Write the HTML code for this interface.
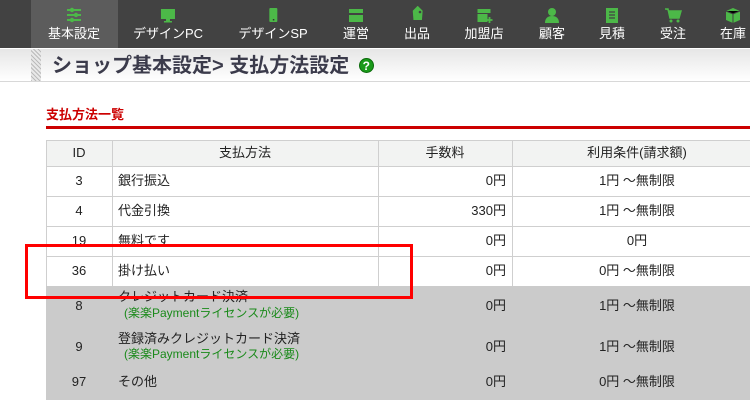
<!DOCTYPE html>
<html><head><meta charset="utf-8"><style>
*{margin:0;padding:0;box-sizing:border-box}
body{width:750px;height:400px;overflow:hidden;background:#fff;font-family:"Liberation Sans","Noto Sans CJK JP",sans-serif;position:relative;color:#222}
.nav{position:absolute;left:0;top:0;width:750px;height:48px;background:#424242}
.act{position:absolute;left:31px;top:0;width:87px;height:48px;background:#5c5c5c}
.ni{position:absolute;top:0;height:48px;transform:translateX(-50%);text-align:center;color:#fff;font-size:13px;white-space:nowrap}
.ni svg{display:block;margin:6px auto 0;width:18px;height:18px}
.ni span{display:block;margin-top:1px;line-height:18px}
.tb{position:absolute;left:0;top:49px;width:750px;height:33px;background:linear-gradient(#e6e6e6,#fff);border-bottom:1px solid #d8d8d8}
.hatch{position:absolute;left:31px;top:49px;width:10px;height:32px;background:repeating-linear-gradient(45deg,#bbb 0 1px,#e8e8e8 1px 3px)}
.title{position:absolute;left:52px;top:53px;font-size:20px;font-weight:bold;color:#3b3b4b;line-height:26px}
.q{display:inline-block;width:15px;height:15px;border-radius:50%;background:#1a9a1a;color:#fff;font-size:12px;line-height:15px;text-align:center;vertical-align:2px;margin-left:4px;border:1px solid #0a6a0a}
.h2{position:absolute;left:46px;top:104px;color:#c00;font-size:13px;font-weight:bold}
.rl{position:absolute;left:46px;top:126px;width:704px;height:3px;background:#c00}
.c{position:absolute;font-size:13px;line-height:16px}
.grey{position:absolute;left:46px;top:286px;width:704px;height:114px;background:#cbcbcb}
.hl{position:absolute;left:46px;height:1px;width:704px;background:#cfcfcf}
.vl{position:absolute;width:1px;background:#cfcfcf;top:140px;height:146px}
.g{color:#1a8a1a;font-size:12px}
.box{position:absolute;left:25px;top:244px;width:388px;height:55px;border:3px solid #f00}
</style></head><body>
<div class="nav"></div><div class="act"></div>
<div class="ni" style="left:74px"><svg viewBox="0 0 18 18"><g stroke="#4cb848" stroke-width="2"><line x1="2" y1="4" x2="16" y2="4"/><line x1="2" y1="9" x2="16" y2="9"/><line x1="2" y1="14" x2="16" y2="14"/></g><g fill="#4cb848"><circle cx="7" cy="4" r="2.2"/><circle cx="11" cy="9" r="2.2"/><circle cx="7" cy="14" r="2.2"/></g></svg><span>基本設定</span></div>
<div class="ni" style="left:168px"><svg viewBox="0 0 18 18"><rect x="2" y="3" width="14" height="10" fill="#4cb848"/><rect x="7" y="13" width="4" height="2" fill="#4cb848"/><rect x="5" y="15" width="8" height="1.5" fill="#4cb848"/></svg><span>デザインPC</span></div>
<div class="ni" style="left:273px"><svg viewBox="0 0 18 18"><rect x="5" y="2" width="8" height="14" rx="1" fill="#4cb848"/><rect x="8.5" y="13" width="1.5" height="1.5" fill="#333"/></svg><span>デザインSP</span></div>
<div class="ni" style="left:356px"><svg viewBox="0 0 18 18"><rect x="2" y="3" width="14" height="4" fill="#4cb848"/><rect x="2" y="9" width="14" height="7" fill="#4cb848"/></svg><span>運営</span></div>
<div class="ni" style="left:417px"><svg viewBox="0 0 18 18"><path d="M9 3 L16 3 L16 10 L9 16 L3 10 Z" fill="#4cb848" transform="rotate(-45 9 9)"/><circle cx="12" cy="6" r="1.3" fill="#424242"/></svg><span>出品</span></div>
<div class="ni" style="left:484px"><svg viewBox="0 0 18 18"><rect x="2" y="3" width="13" height="4" fill="#4cb848"/><rect x="2" y="8" width="10" height="8" fill="#4cb848"/><path d="M14 11v6M11 14h6" stroke="#4cb848" stroke-width="1.8"/></svg><span>加盟店</span></div>
<div class="ni" style="left:552px"><svg viewBox="0 0 18 18"><circle cx="9" cy="6" r="4" fill="#4cb848"/><path d="M2 17c0-5 3-7 7-7s7 2 7 7z" fill="#4cb848"/></svg><span>顧客</span></div>
<div class="ni" style="left:612px"><svg viewBox="0 0 18 18"><rect x="3" y="2" width="12" height="15" fill="#4cb848"/><path d="M6 6h6M6 9h6M6 12h6" stroke="#424242" stroke-width="1.3"/></svg><span>見積</span></div>
<div class="ni" style="left:673px"><svg viewBox="0 0 18 18"><path d="M1 3h3l2 9h9l2-7H5" fill="#4cb848" stroke="#4cb848" stroke-width="1.5"/><circle cx="7" cy="15" r="1.5" fill="#4cb848"/><circle cx="14" cy="15" r="1.5" fill="#4cb848"/></svg><span>受注</span></div>
<div class="ni" style="left:733px"><svg viewBox="0 0 18 18"><path d="M9 2l7 3v9l-7 3-7-3V5z" fill="#4cb848"/><path d="M2 5l7 3 7-3M9 8v9" stroke="#424242" stroke-width="1"/></svg><span>在庫</span></div>
<div class="tb"></div><div class="hatch"></div>
<div class="title">ショップ基本設定&gt; 支払方法設定 <span class="q">?</span></div>
<div class="h2">支払方法一覧</div><div class="rl"></div>
<div style="position:absolute;left:46px;top:140px;width:704px;height:26px;background:#f2f3f2"></div>
<div class="grey"></div>
<div class="hl" style="top:140px"></div><div class="hl" style="top:166px"></div><div class="hl" style="top:196px"></div><div class="hl" style="top:226px"></div><div class="hl" style="top:256px"></div>
<div class="vl" style="left:46px"></div><div class="vl" style="left:112px"></div><div class="vl" style="left:378px"></div><div class="vl" style="left:512px"></div>
<div class="c" style="left:46px;width:66px;text-align:center;top:145px">ID</div>
<div class="c" style="left:112px;width:266px;text-align:center;top:145px">支払方法</div>
<div class="c" style="left:378px;width:134px;text-align:center;top:145px">手数料</div>
<div class="c" style="left:512px;width:250px;text-align:center;top:145px">利用条件(請求額)</div>
<!-- rows -->
<div class="c" style="left:46px;width:66px;text-align:center;top:173px">3</div><div class="c" style="left:118px;top:173px">銀行振込</div><div class="c" style="left:378px;width:128px;text-align:right;top:173px">0円</div><div class="c" style="left:512px;width:250px;text-align:center;top:173px">1円 ～無制限</div>
<div class="c" style="left:46px;width:66px;text-align:center;top:203px">4</div><div class="c" style="left:118px;top:203px">代金引換</div><div class="c" style="left:378px;width:128px;text-align:right;top:203px">330円</div><div class="c" style="left:512px;width:250px;text-align:center;top:203px">1円 ～無制限</div>
<div class="c" style="left:46px;width:66px;text-align:center;top:233px">19</div><div class="c" style="left:118px;top:233px">無料です</div><div class="c" style="left:378px;width:128px;text-align:right;top:233px">0円</div><div class="c" style="left:512px;width:250px;text-align:center;top:233px">0円</div>
<div class="c" style="left:46px;width:66px;text-align:center;top:263px">36</div><div class="c" style="left:118px;top:263px">掛け払い</div><div class="c" style="left:378px;width:128px;text-align:right;top:263px">0円</div><div class="c" style="left:512px;width:250px;text-align:center;top:263px">0円 ～無制限</div>
<div class="c" style="left:46px;width:66px;text-align:center;top:298px">8</div><div class="c" style="left:118px;top:289px">クレジットカード決済</div><div class="c g" style="left:124px;top:305px">(楽楽Paymentライセンスが必要)</div><div class="c" style="left:378px;width:128px;text-align:right;top:298px">0円</div><div class="c" style="left:512px;width:250px;text-align:center;top:298px">1円 ～無制限</div>
<div class="c" style="left:46px;width:66px;text-align:center;top:339px">9</div><div class="c" style="left:118px;top:331px">登録済みクレジットカード決済</div><div class="c g" style="left:124px;top:346px">(楽楽Paymentライセンスが必要)</div><div class="c" style="left:378px;width:128px;text-align:right;top:339px">0円</div><div class="c" style="left:512px;width:250px;text-align:center;top:339px">1円 ～無制限</div>
<div class="c" style="left:46px;width:66px;text-align:center;top:374px">97</div><div class="c" style="left:118px;top:374px">その他</div><div class="c" style="left:378px;width:128px;text-align:right;top:374px">0円</div><div class="c" style="left:512px;width:250px;text-align:center;top:374px">0円 ～無制限</div>
<div class="box"></div>
</body></html>
